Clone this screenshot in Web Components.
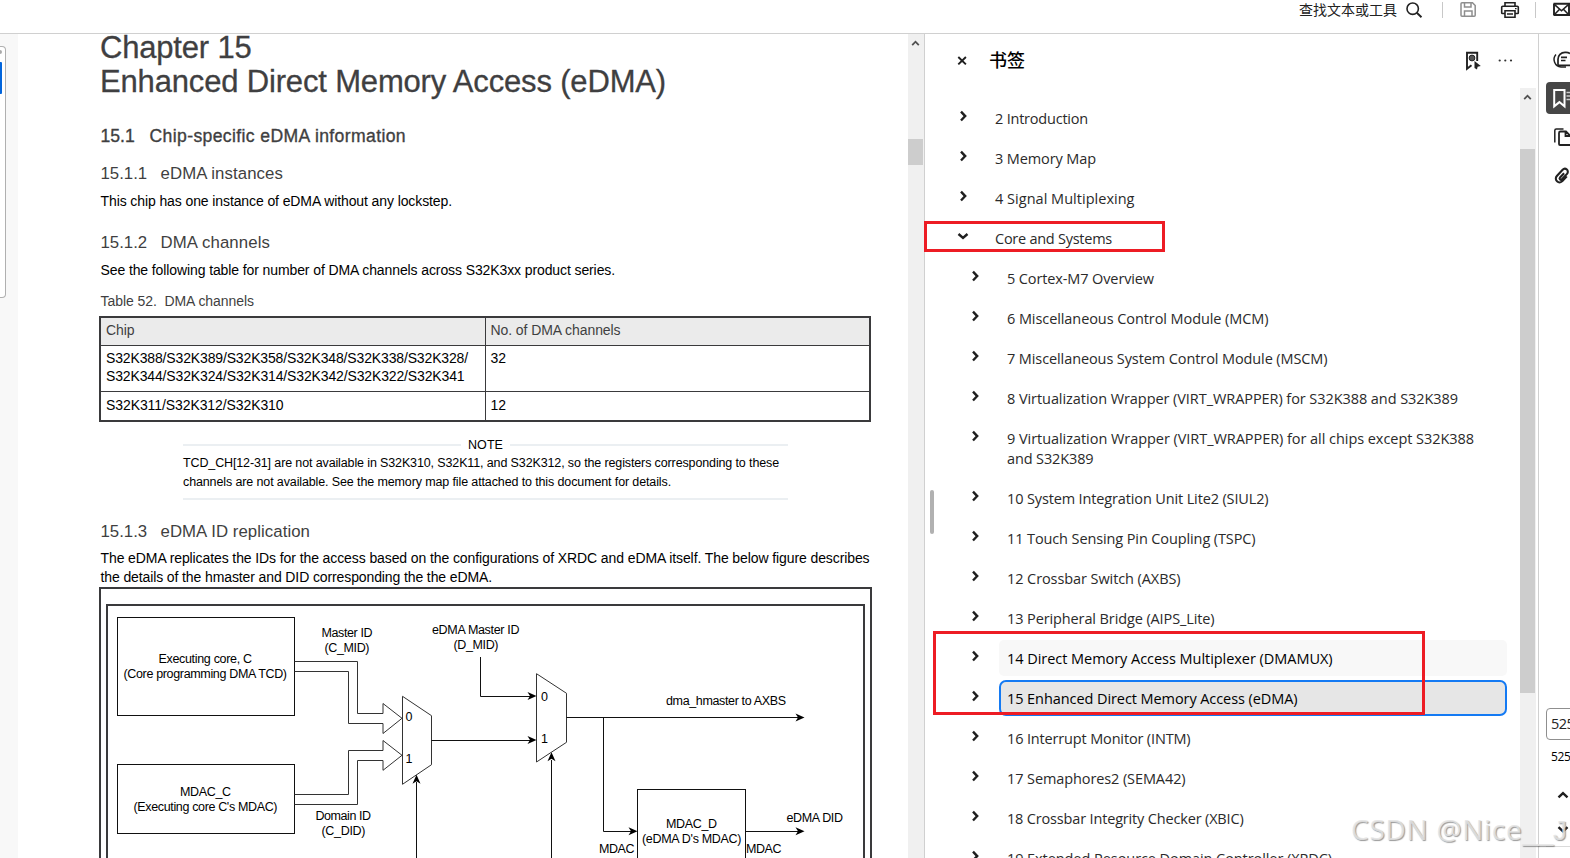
<!DOCTYPE html>
<html lang="zh">
<head>
<meta charset="utf-8">
<title>Bookmarks</title>
<style>
  html, body {
    margin: 0;
    height: 100%;
    overflow: hidden;
    background: #fff;
  }
</style>
</head>
<body>
<pdf-app></pdf-app>

<script>
// Text run stretched to a given width by letter-spacing
class FitText extends HTMLElement {
  constructor() {
    super();
    this.attachShadow({ mode: "open" });
    this.shadowRoot.innerHTML = `
      <style>
        :host { display: inline-block; white-space: nowrap; }
        span { display: inline-block; white-space: pre; }
      </style>
      <span><slot></slot></span>`;
  }
  connectedCallback() {
    const width = parseFloat(this.getAttribute("w"));
    const span = this.shadowRoot.querySelector("span");
    const now = span.getBoundingClientRect().width;
    const count = this.textContent.length;
    if (width && count) {
      span.style.letterSpacing = (width - now) / count + "px";
    }
  }
}

class TopBar extends HTMLElement {
  constructor() {
    super();
    this.attachShadow({ mode: "open" });
    this.shadowRoot.innerHTML = `
      <style>
        :host {
          display: flex;
          box-sizing: border-box;
          height: 34px;
          padding: 0 0 13px 1299px;
          align-items: center;
          border-bottom: 1px solid #d0d0d0;
          background: #fff;
          font: 14px/20px "Noto Sans CJK SC", sans-serif;
          color: #222;
          overflow: hidden;
        }
        span { width: 98px; margin-top: -2px; white-space: nowrap; }
        svg { display: block; flex: none; }
      </style>
      <span>查找文本或工具</span>
      <svg width="173" height="20" viewBox="1397 0 173 20" fill="none" stroke="#222" stroke-width="1.6">
        <circle cx="1412.700" cy="8.700" r="5.700"/>
        <path d="M1416.800 12.800l4.700 4.400" stroke-width="1.900"/>
        <path d="M1442.500 2v16M1535.500 2v16" stroke="#c8c8c8" stroke-width="1"/>
        <g stroke="#8e8e8e" stroke-width="1.500">
          <path d="M1462 2.800h10.500l2.700 2.700v9.700q0 1-1 1h-12.200q-1 0-1-1v-11.400q0-1 1-1z"/>
          <path d="M1464.500 3v4h6.500v-4M1464.500 16v-5h7.500v5"/>
        </g>
        <g stroke-width="1.600">
          <path d="M1505 6v-3.200h10v3.200M1505 13.500h-2.500q-.8 0-.8-.8v-5.400q0-1 1-1h14.600q1 0 1 1v5.400q0 .8-.8.8h-2.500"/>
          <path d="M1505 10.800h10v6.400h-10zM1507 14h6"/>
          <path d="M1515 8.700h1.600" stroke-width="1.200"/>
        </g>
        <path d="M1553.500 3.800h16.500M1553.500 15h16.500M1554 3.800v11.200M1569 3.800v11.200" stroke-width="1.900"/>
        <path d="M1554 4.200l7.500 6.600 7.500-6.600M1554 15l5.600-5.700M1569 15l-5.600-5.700"/>
      </svg>`;
  }
}
customElements.define("top-bar", TopBar);

class ScrollBar extends HTMLElement {
  connectedCallback() {
    const lead = this.getAttribute("lead");
    const size = this.getAttribute("size");
    this.attachShadow({ mode: "open" });
    this.shadowRoot.innerHTML = `
      <style>
        :host { display: block; width: 16px; background: #f0f0f0; }
        .head { height: ${lead}px; padding-top: 5px; box-sizing: border-box; }
        .thumb { width: 15px; height: ${size}px; background: #cdcdcd; }
        svg { display: block; }
      </style>
      <div class="head">
        <svg width="15" height="8" fill="none" stroke="#505050" stroke-width="1.800">
          <path d="M4.200 6.200l3.300-3.500 3.300 3.500"/>
        </svg>
      </div>
      <div class="thumb"></div>`;
  }
}
customElements.define("scroll-bar", ScrollBar);

class LeftGutter extends HTMLElement {
  constructor() {
    super();
    this.attachShadow({ mode: "open" });
    this.shadowRoot.innerHTML = `
      <style>
        :host { display: block; width: 18px; background: #f8f8f8; padding-top: 12px; box-sizing: border-box; }
        .card {
          width: 6px;
          height: 252px;
          box-sizing: border-box;
          border: 1px solid #b0b0b0;
          border-left: 0;
          border-radius: 0 4px 4px 0;
          background: #fff;
          padding-top: 3px;
        }
        .dot { width: 2px; height: 4px; background: #aaa; border-radius: 0 2px 2px 0; }
        .tool { width: 2px; height: 32px; margin-top: 8px; background: #0265dc; border-radius: 0 1px 1px 0; }
      </style>
      <div class="card"><div class="dot"></div><div class="tool"></div></div>`;
  }
}
customElements.define("left-gutter", LeftGutter);

class DocHeading extends HTMLElement {
  connectedCallback() {
    this.attachShadow({ mode: "open" });
    this.shadowRoot.innerHTML = `
      <style>
        :host {
          display: flex;
          margin-left: 1.500px;
          font-size: 16.800px;
          line-height: 22px;
          color: #3f3f41;
        }
        :host([level="2"]) {
          font-size: 17.600px;
          line-height: 24px;
          -webkit-text-stroke: .35px #3f3f41;
        }
        .num { width: 60px; }
        :host([level="2"]) .num { width: 49px; }
      </style>
      <span class="num">${this.getAttribute("num")}</span><slot></slot>`;
  }
}
customElements.define("doc-heading", DocHeading);

class ChipTable extends HTMLElement {
  constructor() {
    super();
    this.attachShadow({ mode: "open" });
    this.shadowRoot.innerHTML = `
      <style>
        :host {
          display: grid;
          grid-template-columns: 384px 1fr;
          grid-template-rows: 27px 45px 28px;
          gap: 1px;
          border: 2px solid #3a3a3c;
          background: #3a3a3c;
          box-sizing: border-box;
          width: 772px;
          font-size: 14px;
          line-height: 18px;
        }
        div { background: #fff; padding: 3px 0 0 5px; overflow: hidden; }
        div:nth-child(odd) { padding-left: 4.500px; }
        .h { background: #ebebeb; color: #3f3f41; }
        .last { padding-top: 4px; }
      </style>
      <div class="h"><fit-text w="28.500">Chip</fit-text></div>
      <div class="h"><fit-text w="130">No. of DMA channels</fit-text></div>
      <div><fit-text w="362">S32K388/S32K389/S32K358/S32K348/S32K338/S32K328/</fit-text><br><fit-text w="358.500">S32K344/S32K324/S32K314/S32K342/S32K322/S32K341</fit-text></div>
      <div>32</div>
      <div class="last"><fit-text w="177.500">S32K311/S32K312/S32K310</fit-text></div>
      <div class="last">12</div>`;
  }
}
customElements.define("chip-table", ChipTable);

class DocNote extends HTMLElement {
  constructor() {
    super();
    this.attachShadow({ mode: "open" });
    this.shadowRoot.innerHTML = `
      <style>
        :host {
          display: block;
          width: 605px;
          margin-left: 84px;
          padding-bottom: 6px;
          border-bottom: 2px solid #ebeff2;
          font-size: 12.500px;
          line-height: 19px;
        }
        .title { display: flex; align-items: center; gap: 7px; height: 17px; line-height: 17px; }
        .title i { flex: 1; height: 2px; margin-top: -1px; background: #ebeff2; }
      </style>
      <div class="title"><i></i><fit-text w="35">NOTE</fit-text><i></i></div>
      <slot></slot>`;
  }
}
customElements.define("doc-note", DocNote);

class EdmaFigure extends HTMLElement {
  constructor() {
    super();
    this.attachShadow({ mode: "open" });
    this.shadowRoot.innerHTML = `
      <style>
        :host {
          display: block;
          box-sizing: border-box;
          width: 773px;
          height: 300px;
          border: 2px solid #3a3a3c;
          padding: 15px 5px 0 5px;
        }
        .frame { border: 2px solid #3a3a3c; height: 300px; }
        svg { display: block; font-size: 12.500px; }
      </style>
      <div class="frame">
      <svg width="755" height="252" viewBox="108 606 755 252">
        <g fill="none" stroke="#111" stroke-width="1">
          <rect x="117.500" y="617.500" width="177" height="98"/>
          <rect x="117.500" y="764.500" width="177" height="69"/>
          <rect x="637.500" y="789.500" width="108" height="90"/>
          <path stroke="#333" d="M294.500 661.500H357.500V713.500H383V703.500L402 718.300 383 733.500V723.500H348.500V671.500H294.500"/>
          <path stroke="#333" d="M294.500 794.500H348.500V750.500H383V740.500L402 755.300 383 770.300V760.500H357.500V804.500H294.500"/>
          <path stroke="#333" d="M402.500 696.300L431.500 715.700V764.700L402.500 784.300z"/>
          <path stroke="#333" d="M536.500 673.700L566.500 693.300V742.300L536.500 762z"/>
          <path d="M431.500 740.500H530M480.500 657V696.500H530M566.500 717.500H798M603.500 717.500V831.500H632M745.500 831.500H798M416.500 858V782M551.500 858V760"/>
        </g>
        <g fill="#000">
          <path d="M536.500 696l-9-4 2.500 4-2.500 4z"/>
          <path d="M536.500 740l-9-4 2.500 4-2.500 4z"/>
          <path d="M804.500 717.500l-9-4 2.500 4-2.500 4z"/>
          <path d="M637.500 831.300l-9-4 2.500 4-2.500 4z"/>
          <path d="M804.500 831.300l-9-4 2.500 4-2.500 4z"/>
          <path d="M416.500 774.800l-4 9 4-2.500 4 2.500z"/>
          <path d="M551.500 752.200l-4 9 4-2.500 4 2.500z"/>
        </g>
        <g fill="#000">
          <text x="158.500" y="663" textLength="93.500">Executing core, C</text>
          <text x="123.500" y="678" textLength="163.500">(Core programming DMA TCD)</text>
          <text x="321.500" y="637" textLength="51">Master ID</text>
          <text x="324.500" y="652" textLength="45">(C_MID)</text>
          <text x="432" y="634" textLength="87.500">eDMA Master ID</text>
          <text x="453.500" y="649" textLength="45">(D_MID)</text>
          <text x="180" y="796" textLength="51">MDAC_C</text>
          <text x="133.500" y="811" textLength="144">(Executing core C's MDAC)</text>
          <text x="315.500" y="820" textLength="55.500">Domain ID</text>
          <text x="321.500" y="835" textLength="44">(C_DID)</text>
          <text x="405.500" y="721">0</text>
          <text x="405.500" y="763">1</text>
          <text x="541" y="701">0</text>
          <text x="541" y="743">1</text>
          <text x="666" y="705" textLength="120">dma_hmaster to AXBS</text>
          <text x="666" y="828" textLength="51">MDAC_D</text>
          <text x="642" y="843" textLength="99.500">(eDMA D's MDAC)</text>
          <text x="599" y="853" textLength="35.500">MDAC</text>
          <text x="746" y="853" textLength="35.500">MDAC</text>
          <text x="786.500" y="822" textLength="56.500">eDMA DID</text>
        </g>
      </svg>
      </div>`;
  }
}
customElements.define("edma-figure", EdmaFigure);

class DocPage extends HTMLElement {
  constructor() {
    super();
    this.attachShadow({ mode: "open" });
    this.shadowRoot.innerHTML = `
      <style>
        :host {
          display: block;
          box-sizing: border-box;
          width: 890px;
          padding-left: 81px;
          overflow: hidden;
          background: #fff;
          font-family: "Liberation Sans", Arial, sans-serif;
          color: #000;
        }
        h1 {
          margin: -3px 0 0 1px;
          font-size: 31px;
          line-height: 34px;
          font-weight: 400;
          color: #3f3f41;
          -webkit-text-stroke: .3px #3f3f41;
        }
        p { margin: 7px 0 0 1.500px; font-size: 14px; line-height: 19px; }
        .caption { margin-top: 12px; color: #3f3f41; }
      </style>
      <h1><fit-text w="151.500">Chapter 15</fit-text><br><fit-text w="566">Enhanced Direct Memory Access (eDMA)</fit-text></h1>
      <doc-heading level="2" num="15.1" style="margin-top:25px"><fit-text w="256.500">Chip-specific eDMA information</fit-text></doc-heading>
      <doc-heading num="15.1.1" style="margin-top:15px"><fit-text w="122.500">eDMA instances</fit-text></doc-heading>
      <p><fit-text w="351.500">This chip has one instance of eDMA without any lockstep.</fit-text></p>
      <doc-heading num="15.1.2" style="margin-top:21px"><fit-text w="109.500">DMA channels</fit-text></doc-heading>
      <p><fit-text w="514.500">See the following table for number of DMA channels across S32K3xx product series.</fit-text></p>
      <p class="caption"><fit-text w="153.500">Table 52.  DMA channels</fit-text></p>
      <chip-table style="margin-top:5px"></chip-table>
      <doc-note style="margin-top:15px"><fit-text w="596">TCD_CH[12-31] are not available in S32K310, S32K11, and S32K312, so the registers corresponding to these</fit-text><br><fit-text w="488">channels are not available. See the memory map file attached to this document for details.</fit-text></doc-note>
      <doc-heading num="15.1.3" style="margin-top:21px"><fit-text w="149.500">eDMA ID replication</fit-text></doc-heading>
      <p style="margin-top:6px"><fit-text w="769">The eDMA replicates the IDs for the access based on the configurations of XRDC and eDMA itself. The below figure describes</fit-text><br><fit-text w="391.500">the details of the hmaster and DID corresponding the the eDMA.</fit-text></p>
      <edma-figure></edma-figure>`;
  }
}
customElements.define("doc-page", DocPage);

class BookmarkItem extends HTMLElement {
  connectedCallback() {
    this.attachShadow({ mode: "open" });
    this.shadowRoot.innerHTML = `
      <style>
        :host {
          display: flex;
          margin-bottom: 4px;
          padding-left: 32px;
          font-size: 14.500px;
          line-height: 20px;
          color: #2a2a2a;
        }
        :host([sub]) { padding-left: 44px; }
        svg { flex: none; width: 30px; height: 32px; }
        .label {
          flex: 1;
          box-sizing: border-box;
          min-height: 36px;
          padding: 9px 8px 7px;
          border-radius: 5px;
        }
        :host([hover]) .label { background: #f8f8f8; color: #000; }
        :host([selected]) .label {
          background: #e6e6e6;
          color: #000;
          border: 2px solid #147af3;
          border-radius: 7px;
          padding: 7px 6px 5px;
        }
      </style>
      <svg fill="none" stroke="#1f1f1f" stroke-width="2.400">
        <path d="${this.hasAttribute("open") ? "M1.500 14l4.500 4 4.500-4" : "M4 11.700l4.200 4.400-4.200 4.400"}"/>
      </svg>
      <div class="label"><slot></slot></div>`;
  }
}
customElements.define("bookmark-item", BookmarkItem);

class BookmarkPanel extends HTMLElement {
  constructor() {
    super();
    this.attachShadow({ mode: "open" });
    this.shadowRoot.innerHTML = `
      <style>
        :host {
          display: flex;
          flex-direction: column;
          box-sizing: border-box;
          border-left: 1px solid #d0d0d0;
          border-right: 1px solid #d0d0d0;
          width: 615px;
          height: 824px;
          background: #fff;
          font-family: "Open Sans", "Noto Sans", sans-serif;
          position: relative;
        }
        header {
          flex: none;
          display: flex;
          align-items: center;
          box-sizing: border-box;
          height: 54px;
          padding: 0 0 1px 32px;
        }
        h2 {
          margin: -4px auto 0 21px;
          font: 500 18px/26px "Noto Sans CJK SC", sans-serif;
          color: #000;
        }
        .body { flex: 1; min-height: 0; display: flex; }
        .list { width: 582px; padding-top: 12px; margin-right: 13px; overflow: hidden; }
        .grip {
          position: absolute;
          left: 5px;
          top: 456px;
          width: 4px;
          height: 44px;
          border-radius: 2px;
          background: #b1b1b1;
        }
        .mark { position: absolute; box-sizing: border-box; border: 3px solid #ed1c24; }
      </style>
      <header>
        <svg width="11" height="11" fill="none" stroke="#1f1f1f" stroke-width="1.900"><path d="M1.300 2l7.600 7.400M8.900 2l-7.600 7.400"/></svg>
        <h2>书签</h2>
        <svg width="72" height="20" viewBox="1466 51 72 20">
          <path d="M1477.200 61v-8.200h-10.200v16l4.500-3.600" fill="none" stroke="#222" stroke-width="1.900"/>
          <circle cx="1472" cy="58" r="2.900" fill="#555" stroke="#222" stroke-width="1"/>
          <path d="M1474.500 61l6.300 5-3.200.7-.6 2.800-2.500-1.500z" fill="#222"/>
          <g fill="#333"><circle cx="1499.700" cy="60.500" r="1.100"/><circle cx="1505.300" cy="60.500" r="1.100"/><circle cx="1511" cy="60.500" r="1.100"/></g>
        </svg>
      </header>
      <div class="body">
        <div class="list">
          <bookmark-item><fit-text w="93">2 Introduction</fit-text></bookmark-item>
          <bookmark-item><fit-text w="101">3 Memory Map</fit-text></bookmark-item>
          <bookmark-item><fit-text w="139.500">4 Signal Multiplexing</fit-text></bookmark-item>
          <bookmark-item open><fit-text w="117">Core and Systems</fit-text></bookmark-item>
          <bookmark-item sub><fit-text w="147">5 Cortex-M7 Overview</fit-text></bookmark-item>
          <bookmark-item sub><fit-text w="261.500">6 Miscellaneous Control Module (MCM)</fit-text></bookmark-item>
          <bookmark-item sub><fit-text w="320.500">7 Miscellaneous System Control Module (MSCM)</fit-text></bookmark-item>
          <bookmark-item sub><fit-text w="451">8 Virtualization Wrapper (VIRT_WRAPPER) for S32K388 and S32K389</fit-text></bookmark-item>
          <bookmark-item sub><fit-text w="467">9 Virtualization Wrapper (VIRT_WRAPPER) for all chips except S32K388</fit-text><br><fit-text w="86.500">and S32K389</fit-text></bookmark-item>
          <bookmark-item sub><fit-text w="261.500">10 System Integration Unit Lite2 (SIUL2)</fit-text></bookmark-item>
          <bookmark-item sub><fit-text w="248.500">11 Touch Sensing Pin Coupling (TSPC)</fit-text></bookmark-item>
          <bookmark-item sub><fit-text w="173.500">12 Crossbar Switch (AXBS)</fit-text></bookmark-item>
          <bookmark-item sub><fit-text w="207.500">13 Peripheral Bridge (AIPS_Lite)</fit-text></bookmark-item>
          <bookmark-item sub hover><fit-text w="325.500">14 Direct Memory Access Multiplexer (DMAMUX)</fit-text></bookmark-item>
          <bookmark-item sub selected><fit-text w="290.500">15 Enhanced Direct Memory Access (eDMA)</fit-text></bookmark-item>
          <bookmark-item sub><fit-text w="183.500">16 Interrupt Monitor (INTM)</fit-text></bookmark-item>
          <bookmark-item sub><fit-text w="178.500">17 Semaphores2 (SEMA42)</fit-text></bookmark-item>
          <bookmark-item sub><fit-text w="236.500">18 Crossbar Integrity Checker (XBIC)</fit-text></bookmark-item>
          <bookmark-item sub><fit-text w="325">19 Extended Resource Domain Controller (XRDC)</fit-text></bookmark-item>
        </div>
        <scroll-bar lead="61" size="544"></scroll-bar>
      </div>
      <div class="grip"></div>
      <div class="mark" style="left:-1px;top:187px;width:241px;height:31px"></div>
      <div class="mark" style="left:8px;top:597px;width:492px;height:84px"></div>`;
  }
}
customElements.define("bookmark-panel", BookmarkPanel);

class ToolRail extends HTMLElement {
  constructor() {
    super();
    this.attachShadow({ mode: "open" });
    this.shadowRoot.innerHTML = `
      <style>
        :host {
          display: flex;
          flex-direction: column;
          width: 31px;
          padding-left: 7px;
          box-sizing: border-box;
          overflow: hidden;
          background: #fff;
          font-family: "Open Sans", "Noto Sans", sans-serif;
          color: #222;
        }
        svg { display: block; flex: none; }
        .page {
          flex: none;
          box-sizing: border-box;
          width: 44px;
          height: 32px;
          margin-top: 514px;
          padding-left: 4px;
          border: 1px solid #8f8f8f;
          border-radius: 4px;
          font-size: 14.500px;
          line-height: 30px;
          letter-spacing: -.5px;
        }
        .total { margin: 8px 0 0 5px; font-size: 12px; line-height: 18px; letter-spacing: -.4px; color: #000; }
        .line { width: 40px; height: 1px; background: #dadada; }
      </style>
      <svg width="24" height="160" viewBox="1546 34 24 160" fill="none" stroke="#222" stroke-width="1.700">
        <path d="M1570 65.300h-11.200q-.8 0-.8-.8v-5a7 7 0 0 1 7-7.200h1q2.500 0 4 1.200"/>
        <path d="M1556 54.500a7.500 7.500 0 0 0 5 12.500h5" stroke-width="1.500"/>
        <path d="M1561 57.300h6M1561 60.500h4.500"/>
        <rect x="1546" y="82" width="32" height="32" rx="4" fill="#464646" stroke="none"/>
        <g stroke="#fff">
          <path d="M1554.200 90h10.300v16.300l-5.100-4.200-5.200 4.200z" stroke-width="2"/>
          <path d="M1566.500 92.500h4M1566.500 96h4M1566.500 99.500h4" stroke="#ccc"/>
        </g>
        <path d="M1563.500 129h-7.200q-1.500 0-1.500 1.500v12" stroke-width="1.500"/>
        <path d="M1559 133v11q0 1 1 1h10M1559 133q0-1.500 1.500-1.500h5.500l4 4M1565.500 131.500v4.500h4.500" stroke-width="1.800"/>
        <path transform="translate(1562 176) rotate(43)" d="M3.800-3v6.500a3.800 3.800 0 0 1-7.600 0v-8.500a3 3 0 0 1 6 0v7.500a1.300 1.300 0 0 1-2.600 0v-6" stroke-width="2.100"/>
      </svg>
      <div class="page">525</div>
      <div class="total">525</div>
      <svg width="24" height="80" viewBox="1546 766 24 80" fill="none" stroke="#1f1f1f" stroke-width="2.400">
        <path d="M1558.500 797.300l4.500-4.200 4.500 4.200M1558.500 827.200l4.500 4.200 4.500-4.200"/>
      </svg>
      <div class="line"></div>`;
  }
}
customElements.define("tool-rail", ToolRail);

class PdfApp extends HTMLElement {
  constructor() {
    super();
    this.attachShadow({ mode: "open" });
    this.shadowRoot.innerHTML = `
      <style>
        :host { display: block; width: 1570px; height: 858px; overflow: hidden; position: relative; }
        main { display: flex; height: 824px; }
        main > * { flex: none; }
        .stamp {
          position: absolute;
          left: 1351px;
          top: 811px;
          white-space: nowrap;
          font: 28px/36px "Open Sans", sans-serif;
          color: rgba(228, 228, 228, .85);
          text-shadow: 1px 1px 1px rgba(110, 110, 110, .7);
        }
        .tail { font-family: "Liberation Sans", Arial, sans-serif; letter-spacing: -.3px; }
      </style>
      <top-bar></top-bar>
      <main>
        <left-gutter></left-gutter>
        <doc-page></doc-page>
        <scroll-bar lead="105" size="26"></scroll-bar>
        <bookmark-panel></bookmark-panel>
        <tool-rail></tool-rail>
      </main>
      <div class="stamp"><fit-text w="171.500">CSDN @Nice</fit-text><span class="tail">__J</span></div>`;
  }
}
customElements.define("pdf-app", PdfApp);

// registered last so that every run is measured in its final place
customElements.define("fit-text", FitText);
</script>
</body>
</html>
